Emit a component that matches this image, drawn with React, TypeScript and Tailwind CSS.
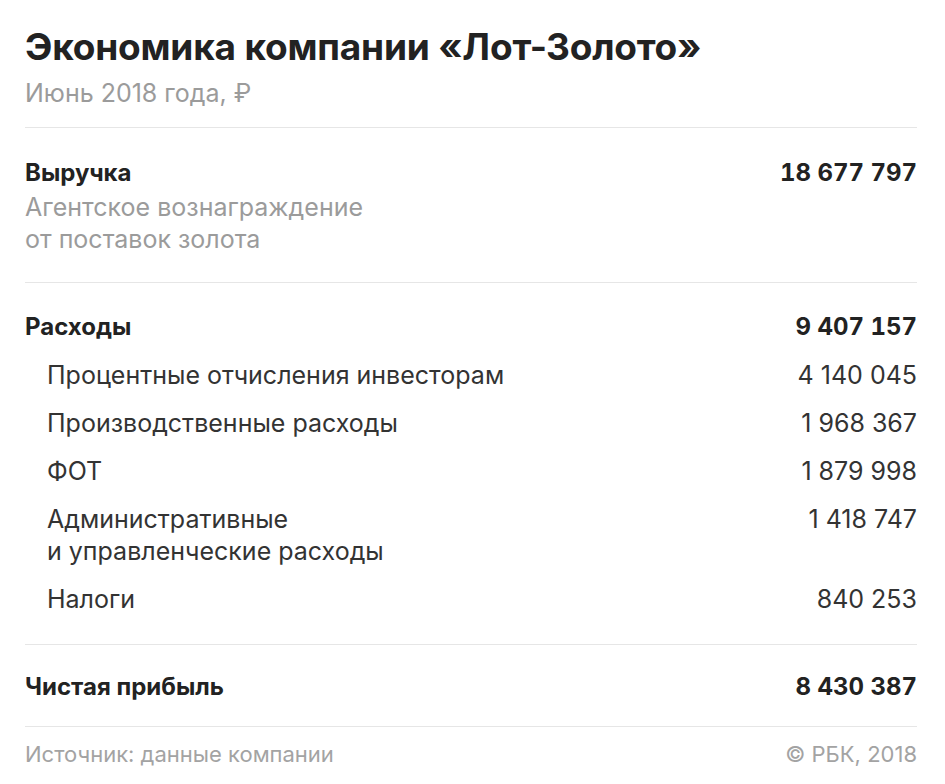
const font = { fontFamily: "Inter, 'Noto Sans', sans-serif" };

type Item = { label: string[]; value: string };

const expenses: Item[] = [
  { label: ["Процентные отчисления инвесторам"], value: "4 140 045" },
  { label: ["Производственные расходы"], value: "1 968 367" },
  { label: ["ФОТ"], value: "1 879 998" },
  { label: ["Административные", "и управленческие расходы"], value: "1 418 747" },
  { label: ["Налоги"], value: "840 253" },
];

function TotalRow({ label, value }: { label: string; value: string }) {
  return (
    <div className="flex justify-between text-[24px] leading-[32px] font-bold text-[#222]">
      <span>{label}</span>
      <span className="tabular-nums">{value}</span>
    </div>
  );
}

export default function App() {
  return (
    <div className="w-[945px] h-[784px] bg-white pl-[25px] pr-[28px] pt-[25px]" style={font}>
      <h1 className="text-[37px] leading-[44px] font-bold text-[#222] tracking-[-0.2px]">
        Экономика компании «Лот-Золото»
      </h1>
      <p className="text-[25px] leading-[32px] text-[#9b9b9b] mt-[8px]">Июнь 2018 года, ₽</p>

      <div className="mt-[18px] border-t border-[#e6e6e6] pt-[29px] pb-[27px]">
        <TotalRow label="Выручка" value="18 677 797" />
        <p className="text-[25px] leading-[32px] text-[#9b9b9b] mt-[2px]">
          Агентское вознаграждение
          <br />
          от поставок золота
        </p>
      </div>

      <div className="border-t border-[#e6e6e6] pt-[28px] pb-[29px]">
        <TotalRow label="Расходы" value="9 407 157" />
        <div className="flex flex-col gap-[16px] mt-[16px]">
          {expenses.map((e) => (
            <div key={e.value} className="flex justify-between pl-[22px] text-[25px] leading-[32px] text-[#333]">
              <span>
                {e.label.map((l, i) => (
                  <span key={i} className="block">
                    {l}
                  </span>
                ))}
              </span>
              <span>{e.value}</span>
            </div>
          ))}
        </div>
      </div>

      <div className="border-t border-[#e6e6e6] pt-[26px] pb-[23px]">
        <TotalRow label="Чистая прибыль" value="8 430 387" />
      </div>

      <div className="border-t border-[#e6e6e6] pt-[12px] flex justify-between text-[22px] leading-[30px] text-[#a3a3a3]">
        <span>Источник: данные компании</span>
        <span>© РБК, 2018</span>
      </div>
    </div>
  );
}
